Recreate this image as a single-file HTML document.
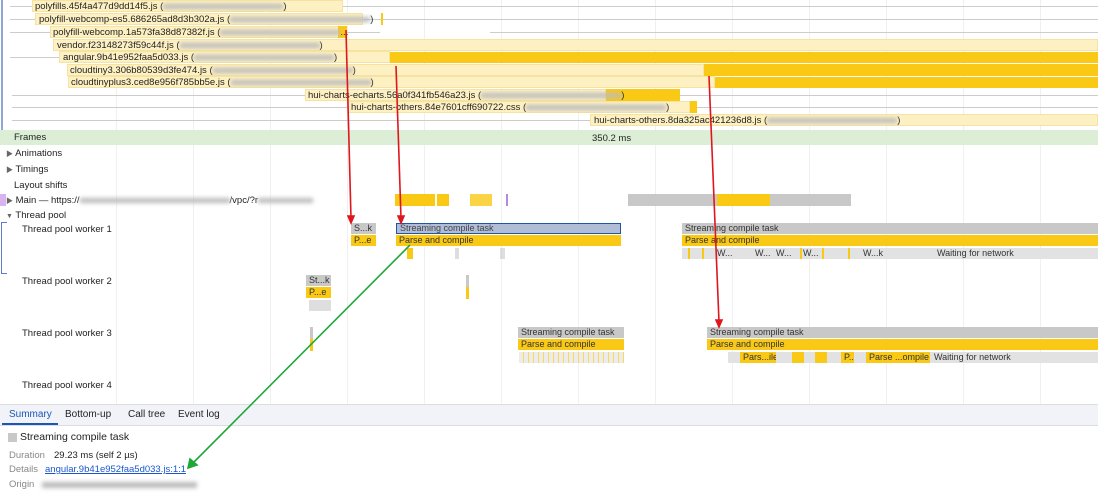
<!DOCTYPE html>
<html><head><meta charset="utf-8"><style>
*{margin:0;padding:0;box-sizing:border-box}
body{width:1098px;height:497px;overflow:hidden;background:#fff;font-family:"Liberation Sans","Noto Sans CJK SC",sans-serif;font-size:9.5px;color:#222;position:relative}
.a{position:absolute;white-space:nowrap;overflow:hidden}
.lt{background:#fdf0c2;border:1px solid #f7e3a0}
.dk{background:#f9c916}
.gr{background:#c8c8c8}
.bl{filter:blur(2px);color:#999;background:#bbb;height:5px}
.gl{position:absolute;top:0;width:1px;height:404px;background:#f0f0f0}
.wh{position:absolute;height:1px;background:#ccc}
.lab{position:absolute;font-size:9.5px;color:#222}
.bar{position:absolute;height:11px;font-size:9px;line-height:11px;padding-left:3px;white-space:nowrap;overflow:hidden;color:#333}
.t{position:absolute;font-size:9px;line-height:11px;color:#333}
</style></head><body>
<div class="gl" style="left:116px"></div><div class="gl" style="left:193px"></div><div class="gl" style="left:270px"></div><div class="gl" style="left:347px"></div><div class="gl" style="left:424px"></div><div class="gl" style="left:501px"></div><div class="gl" style="left:578px"></div><div class="gl" style="left:655px"></div><div class="gl" style="left:732px"></div><div class="gl" style="left:809px"></div><div class="gl" style="left:886px"></div><div class="gl" style="left:963px"></div><div class="gl" style="left:1040px"></div>
<div class="a" style="left:1px;top:0;width:2px;height:130px;background:#8ea6d8"></div>

<div class="wh" style="left:10px;top:6px;width:1088px"></div>
<div class="a lt" style="left:32px;top:0;width:311px;height:12px"></div>
<div class="a" style="left:35px;top:1px">polyfills.45f4a477d9dd14f5.js (<span class="bl" style="display:inline-block;width:120px"></span>)</div>
<div class="wh" style="left:10px;top:19px;width:1088px"></div>
<div class="a lt" style="left:35px;top:13px;width:328px;height:12px"></div><div class="a dk" style="left:381px;top:13px;width:2px;height:12px"></div>
<div class="a" style="left:39px;top:14px">polyfill-webcomp-es5.686265ad8d3b302a.js (<span class="bl" style="display:inline-block;width:140px"></span>)</div>
<div class="wh" style="left:10px;top:32px;width:370px"></div><div class="wh" style="left:490px;top:32px;width:608px"></div>
<div class="a lt" style="left:50px;top:26px;width:297px;height:12px"></div><div class="a dk" style="left:338px;top:26px;width:9px;height:12px"></div>
<div class="a" style="left:53px;top:27px">polyfill-webcomp.1a573fa38d87382f.js (<span class="bl" style="display:inline-block;width:120px"></span>...</div>
<div class="a lt" style="left:53px;top:39px;width:1045px;height:12px"></div>
<div class="a" style="left:57px;top:40px">vendor.f23148273f59c44f.js (<span class="bl" style="display:inline-block;width:140px"></span>)</div>
<div class="wh" style="left:10px;top:57px;width:1088px"></div>
<div class="a lt" style="left:59px;top:51px;width:331px;height:12px"></div><div class="a dk" style="left:390px;top:52px;width:708px;height:11px"></div>
<div class="a" style="left:63px;top:52px">angular.9b41e952faa5d033.js (<span class="bl" style="display:inline-block;width:140px"></span>)</div>
<div class="a lt" style="left:67px;top:64px;width:637px;height:12px"></div><div class="a dk" style="left:704px;top:64px;width:394px;height:12px"></div>
<div class="a" style="left:70px;top:65px">cloudtiny3.306b80539d3fe474.js (<span class="bl" style="display:inline-block;width:140px"></span>)</div>
<div class="a lt" style="left:68px;top:76px;width:647px;height:12px"></div><div class="a dk" style="left:715px;top:77px;width:383px;height:11px"></div>
<div class="a" style="left:71px;top:77px">cloudtinyplus3.ced8e956f785bb5e.js (<span class="bl" style="display:inline-block;width:140px"></span>)</div>
<div class="wh" style="left:12px;top:95px;width:1086px"></div>
<div class="a lt" style="left:305px;top:89px;width:301px;height:12px"></div><div class="a dk" style="left:606px;top:89px;width:74px;height:12px"></div>
<div class="a" style="left:308px;top:90px">hui-charts-echarts.56a0f341fb546a23.js (<span class="bl" style="display:inline-block;width:140px"></span>)</div>
<div class="wh" style="left:12px;top:107px;width:1086px"></div>
<div class="a lt" style="left:348px;top:101px;width:342px;height:12px"></div><div class="a dk" style="left:690px;top:101px;width:7px;height:12px"></div>
<div class="a" style="left:351px;top:102px">hui-charts-others.84e7601cff690722.css (<span class="bl" style="display:inline-block;width:140px"></span>)</div>
<div class="wh" style="left:12px;top:120px;width:1086px"></div>
<div class="a lt" style="left:590px;top:114px;width:508px;height:12px"></div>
<div class="a" style="left:594px;top:115px">hui-charts-others.8da325ac421236d8.js (<span class="bl" style="display:inline-block;width:130px"></span>)</div>

<div class="a" style="left:0;top:130px;width:1098px;height:15px;background:#dcefd6"></div>
<div class="lab" style="left:14px;top:132px">Frames</div>
<div class="lab" style="left:592px;top:133px">350.2 ms</div>
<div class="lab" style="left:6px;top:148px"><span style="font-size:7px;color:#666">▶</span> Animations</div>
<div class="lab" style="left:6px;top:164px"><span style="font-size:7px;color:#666">▶</span> Timings</div>
<div class="lab" style="left:14px;top:180px">Layout shifts</div>
<div class="a" style="left:0;top:194px;width:6px;height:12px;background:#d7b4f0"></div>
<div class="lab" style="left:6px;top:195px"><span style="font-size:7px;color:#666">▶</span> Main — https://<span class="bl" style="display:inline-block;width:150px"></span>/vpc/?r<span class="bl" style="display:inline-block;width:55px"></span></div>
<div class="a dk" style="left:395px;top:194px;width:40px;height:12px"></div>
<div class="a dk" style="left:437px;top:194px;width:12px;height:12px"></div>
<div class="a dk" style="left:470px;top:194px;width:22px;height:12px;opacity:.8"></div>
<div class="a" style="left:506px;top:194px;width:2px;height:12px;background:#b48be0"></div>
<div class="a gr" style="left:628px;top:194px;width:223px;height:12px"></div>
<div class="a dk" style="left:717px;top:194px;width:53px;height:12px"></div>
<div class="lab" style="left:6px;top:210px"><span style="font-size:7px;color:#666">▼</span> Thread pool</div>
<div class="a" style="left:1px;top:222px;width:6px;height:52px;border:1px solid #5b7ed0;border-right:none"></div>
<div class="lab" style="left:22px;top:224px">Thread pool worker 1</div>
<div class="lab" style="left:22px;top:276px">Thread pool worker 2</div>
<div class="lab" style="left:22px;top:328px">Thread pool worker 3</div>
<div class="lab" style="left:22px;top:380px">Thread pool worker 4</div>

<div class="bar gr" style="left:351px;top:223px;width:25px">S...k</div>
<div class="bar dk" style="left:351px;top:235px;width:25px">P...e</div>
<div class="bar" style="left:396px;top:223px;width:225px;background:#b1bdd6;border:1.5px solid #1e56a6;line-height:8px;color:#444">Streaming compile task</div>
<div class="bar dk" style="left:396px;top:235px;width:225px">Parse and compile</div>
<div class="a dk" style="left:407px;top:248px;width:6px;height:11px"></div>
<div class="a gr" style="left:455px;top:248px;width:4px;height:11px;opacity:.6"></div>
<div class="a gr" style="left:500px;top:248px;width:5px;height:11px;opacity:.6"></div>
<div class="bar gr" style="left:682px;top:223px;width:416px">Streaming compile task</div>
<div class="bar dk" style="left:682px;top:235px;width:416px">Parse and compile</div>
<div class="a" style="left:682px;top:248px;width:416px;height:11px;background:#e2e2e2"></div>
<div class="a dk" style="left:688px;top:248px;width:2px;height:11px"></div>
<div class="a dk" style="left:702px;top:248px;width:2px;height:11px"></div>
<div class="a dk" style="left:800px;top:248px;width:2px;height:11px"></div>
<div class="a dk" style="left:822px;top:248px;width:2px;height:11px"></div>
<div class="a dk" style="left:848px;top:248px;width:2px;height:11px"></div>
<div class="t" style="left:717px;top:248px">W...</div>
<div class="t" style="left:755px;top:248px">W...</div>
<div class="t" style="left:776px;top:248px">W...</div>
<div class="t" style="left:803px;top:248px">W...</div>
<div class="t" style="left:863px;top:248px">W...k</div>
<div class="t" style="left:937px;top:248px">Waiting for network</div>

<div class="bar gr" style="left:306px;top:275px;width:25px">St...k</div>
<div class="bar dk" style="left:306px;top:287px;width:25px">P...e</div>
<div class="a gr" style="left:309px;top:300px;width:22px;height:11px;opacity:.6"></div>
<div class="a gr" style="left:466px;top:275px;width:3px;height:12px"></div>
<div class="a dk" style="left:466px;top:287px;width:3px;height:12px"></div>

<div class="a gr" style="left:310px;top:327px;width:3px;height:12px"></div>
<div class="a dk" style="left:310px;top:339px;width:3px;height:12px"></div>
<div class="bar gr" style="left:518px;top:327px;width:106px">Streaming compile task</div>
<div class="bar dk" style="left:518px;top:339px;width:106px">Parse and compile</div>
<div class="a" style="left:519px;top:352px;width:105px;height:11px;background:repeating-linear-gradient(90deg,#ececec 0 4px,#f9d85a 4px 5px)"></div>
<div class="bar gr" style="left:707px;top:327px;width:391px">Streaming compile task</div>
<div class="bar dk" style="left:707px;top:339px;width:391px">Parse and compile</div>
<div class="a" style="left:728px;top:352px;width:370px;height:11px;background:#e2e2e2"></div>
<div class="bar dk" style="left:740px;top:352px;width:36px">Pars...ile</div>
<div class="a dk" style="left:792px;top:352px;width:12px;height:11px"></div>
<div class="a dk" style="left:815px;top:352px;width:12px;height:11px"></div>
<div class="bar dk" style="left:841px;top:352px;width:13px">P...</div>
<div class="bar dk" style="left:866px;top:352px;width:64px">Parse ...ompile</div>
<div class="bar" style="left:931px;top:352px;width:160px">Waiting for network</div>

<div class="a" style="left:0;top:404px;width:1098px;height:22px;background:#f1f3f8;border-top:1px solid #ddd;border-bottom:1px solid #ddd"></div>
<div class="a" style="left:9px;top:409px;font-size:10px;color:#1a56b8">Summary</div>
<div class="a" style="left:2px;top:423px;width:56px;height:2px;background:#1a56b8"></div>
<div class="a" style="left:65px;top:409px;font-size:10px">Bottom-up</div>
<div class="a" style="left:128px;top:409px;font-size:10px">Call tree</div>
<div class="a" style="left:178px;top:409px;font-size:10px">Event log</div>
<div class="a" style="left:8px;top:433px;width:9px;height:9px;background:#c8c8c8"></div>
<div class="a" style="left:20px;top:431px;font-size:10.5px">Streaming compile task</div>
<div class="a" style="left:9px;top:450px;color:#888">Duration</div>
<div class="a" style="left:54px;top:450px">29.23 ms (self 2 µs)</div>
<div class="a" style="left:9px;top:464px;color:#888">Details</div>
<div class="a" style="left:45px;top:464px;color:#1a56d0;text-decoration:underline">angular.9b41e952faa5d033.js:1:1</div>
<div class="a" style="left:9px;top:479px;color:#888">Origin</div>
<div class="a bl" style="left:42px;top:482px;width:155px;height:6px"></div>

<svg class="a" style="left:0;top:0" width="1098" height="497">
<g stroke="#e0161e" stroke-width="1.6" fill="#e0161e">
<line x1="346" y1="30" x2="351" y2="218"/><polygon points="348,216 354,216 351,223"/>
<line x1="396" y1="66" x2="401" y2="218"/><polygon points="398,216 404,216 401,223"/>
<line x1="709" y1="76" x2="719" y2="322"/><polygon points="716,320 722,320 719,327"/>
</g>
<g stroke="#1fa83a" stroke-width="1.6" fill="#1fa83a">
<line x1="410" y1="245" x2="192" y2="464"/><polygon points="188,468 190,459 197,465"/>
</g>
</svg>
</body></html>
